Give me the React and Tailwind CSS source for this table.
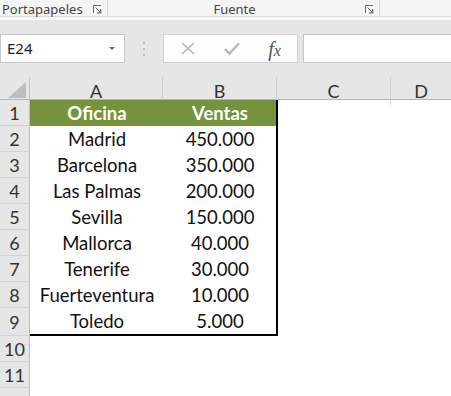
import React from "react";

const rows = [
  ["Madrid", "450.000"],
  ["Barcelona", "350.000"],
  ["Las Palmas", "200.000"],
  ["Sevilla", "150.000"],
  ["Mallorca", "40.000"],
  ["Tenerife", "30.000"],
  ["Fuerteventura", "10.000"],
  ["Toledo", "5.000"],
];

const cellFont = { fontFamily: "Lato, 'Liberation Sans', sans-serif" };
const uiFont = { fontFamily: "'Noto Sans', 'Open Sans', sans-serif" };

function Launcher() {
  return (
    <svg width="9" height="9" viewBox="0 0 9 9" className="text-[#6b6b6b] mb-[2px]">
      <path d="M0.5 8V0.5H8" fill="none" stroke="currentColor" strokeWidth="1" />
      <path d="M2.5 2.5L7.5 7.5" stroke="currentColor" strokeWidth="1" />
      <path d="M4 7.8H7.8V4" fill="none" stroke="currentColor" strokeWidth="1.2" />
    </svg>
  );
}

function RowHead({ n, last }) {
  return (
    <div
      className={`flex items-center justify-center pt-[2px] bg-[#e6e6e6] border-r border-[#bdbdbd] text-[18px] text-[#333] ${
        last ? "" : "border-b border-b-[#d4d4d4]"
      }`}
      style={cellFont}
    >
      {n}
    </div>
  );
}

export default function App() {
  return (
    <div className="w-[451px] h-[396px] overflow-hidden bg-white">
      {/* ribbon group labels */}
      <div
        className="h-[17px] flex bg-[#f5f5f5] border-b border-[#dcdcdc] text-[13px] leading-[13px] text-[#444]"
        style={uiFont}
      >
        <div className="w-[108px] h-full flex items-end justify-between pl-[2px] pr-[5px] border-r border-[#d2d2d2]">
          <span>Portapapeles</span>
          <Launcher />
        </div>
        <div className="w-[272px] h-full flex items-end border-r border-[#d2d2d2] pr-[5px]">
          <span className="flex-1 text-center pr-[4px]">Fuente</span>
          <Launcher />
        </div>
        <div className="flex-1 h-full" />
      </div>
      <div className="h-[3px] bg-[#f8f8f8]" />

      {/* formula bar + column headers */}
      <div className="bg-[#e6e6e6] pt-[14px]">
        <div className="h-[29px] flex" style={uiFont}>
          <div className="w-[125px] h-full bg-white border border-[#c6c6c6] flex items-center justify-between pl-[6px] pr-[9px] text-[15px] text-[#222]">
            <span>E24</span>
            <span className="w-0 h-0 border-l-[3px] border-r-[3px] border-t-[3px] border-l-transparent border-r-transparent border-t-[#6a6a6a]" />
          </div>
          <div className="w-[38px] flex flex-col items-center justify-center gap-[4px]">
            <span className="w-[2px] h-[2px] rounded-full bg-[#a9a9a9]" />
            <span className="w-[2px] h-[2px] rounded-full bg-[#a9a9a9]" />
            <span className="w-[2px] h-[2px] rounded-full bg-[#a9a9a9]" />
          </div>
          <div className="w-[135px] h-full bg-[#fdfdfd] border border-[#d0d0d0] flex items-center">
            <div className="w-[46px] flex justify-center pl-[1px]">
              <svg width="14" height="13" viewBox="0 0 14 13">
                <path d="M1 1L13 12M13 1L1 12" stroke="#b3b3b3" strokeWidth="1.6" />
              </svg>
            </div>
            <div className="w-[44px] flex justify-center">
              <svg width="16" height="13" viewBox="0 0 16 13">
                <path d="M1 7L5.5 11.5L15 1.5" fill="none" stroke="#b3b3b3" strokeWidth="2.2" />
              </svg>
            </div>
            <div
              className="flex-1 flex justify-center items-baseline italic text-[#555] pr-[2px]"
              style={{ fontFamily: "'Liberation Serif', 'DejaVu Serif', serif" }}
            >
              <span className="text-[20px] leading-none">f</span>
              <span className="text-[16px] leading-none">x</span>
            </div>
          </div>
          <div className="w-[5px]" />
          <div className="flex-1 h-full bg-white border border-[#c6c6c6] border-r-0" />
        </div>

        <div className="h-[14px]" />

        <div
          className="h-[23px] grid grid-cols-[30px_133px_114px_114px_1fr] border-b border-[#b5b5b5] text-[18px] text-[#333]"
          style={cellFont}
        >
          <div className="relative border-r border-[#c4c4c4]">
            <svg
              className="absolute left-[8px] top-[5px]"
              width="18"
              height="16"
              viewBox="0 0 18 16"
            >
              <path d="M18 0V16H0Z" fill="#bdbdbd" />
            </svg>
          </div>
          {["A", "B", "C", "D"].map((c) => (
            <div
              key={c}
              className={`flex items-center justify-center pt-[1px] ${
                c === "D" ? "" : "border-r border-[#cfcfcf]"
              }`}
            >
              {c}
            </div>
          ))}
        </div>
      </div>

      {/* sheet */}
      <div
        className="grid grid-cols-[30px_134px_114px_1fr] grid-rows-[repeat(8,26px)_28px_26px_26px_26px] text-[18.5px] text-[#111]"
        style={cellFont}
      >
        <RowHead n={1} />
        <div className="bg-[#76923c] flex items-center justify-center pt-[1px] font-bold text-white">
          Oficina
        </div>
        <div className="bg-[#76923c] flex items-center justify-center pt-[1px] font-bold text-white border-r-2 border-black">
          Ventas
        </div>
        <div />

        {rows.map(([office, sales], i) => {
          const last = i === rows.length - 1;
          return (
            <React.Fragment key={office}>
              <RowHead n={i + 2} />
              <div
                className={`flex items-center justify-center pt-[1px] ${
                  last ? "border-b-2 border-black" : ""
                }`}
              >
                {office}
              </div>
              <div
                className={`flex items-center justify-center pt-[1px] border-r-2 border-black ${
                  last ? "border-b-2" : ""
                }`}
              >
                {sales}
              </div>
              <div />
            </React.Fragment>
          );
        })}

        <RowHead n={10} />
        <div />
        <div />
        <div />
        <RowHead n={11} />
        <div />
        <div />
        <div />
        <RowHead n="" last />
        <div />
        <div />
        <div />
      </div>
    </div>
  );
}
